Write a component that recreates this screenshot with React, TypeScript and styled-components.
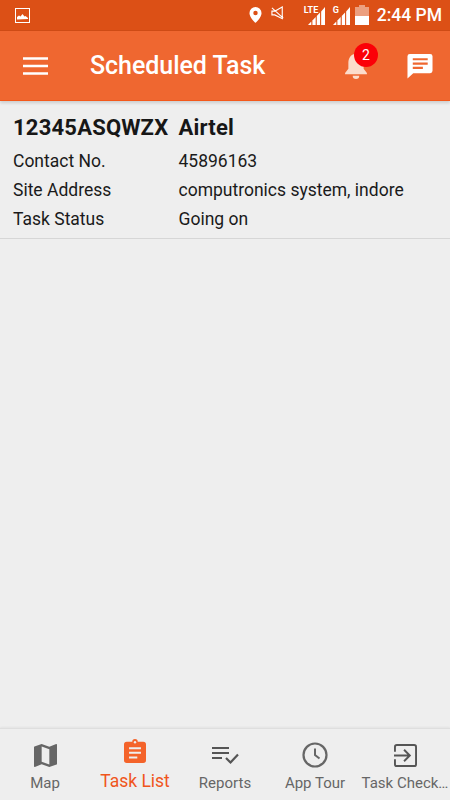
import React from "react";
import styled, { createGlobalStyle } from "styled-components";

const Global = createGlobalStyle`
  html, body { margin: 0; padding: 0; background: #eeeeee; }
  body { font-family: Roboto, "Liberation Sans", sans-serif; }
  * { box-sizing: border-box; }
`;

const Page = styled.div`
  width: 450px;
  height: 800px;
  display: flex;
  flex-direction: column;
  background: #eeeeee;
  overflow: hidden;
`;

const StatusBar = styled.div`
  height: 31px;
  flex: none;
  background: #dc5016;
  border-bottom: 1px solid #cf4c16;
  display: flex;
  align-items: center;
  padding: 0 8px 0 15px;
  color: #fff;
`;

const StatusRight = styled.div`
  margin-left: auto;
  display: flex;
  align-items: center;
`;

const Clock = styled.span`
  font-size: 17.5px;
  font-weight: 500;
  margin-left: 8px;
`;

const AppBar = styled.header`
  height: 70px;
  flex: none;
  background: #ef6730;
  border-bottom: 1px solid #f4581a;
  box-shadow: 0 2px 3px rgba(0, 0, 0, 0.14);
  display: flex;
  align-items: center;
  padding: 0 17px 0 23px;
  position: relative;
`;

const Title = styled.h1`
  margin: 0 0 0 42px;
  font-size: 25px;
  font-weight: 500;
  letter-spacing: -0.05px;
  color: #fff;
  line-height: 30px;
`;

const Actions = styled.div`
  margin-left: auto;
  display: flex;
  align-items: center;
  gap: 39px;
`;

const BellWrap = styled.div`
  position: relative;
  width: 24px;
  height: 30px;
  display: flex;
  align-items: center;
`;

const Badge = styled.span`
  position: absolute;
  top: -8px;
  left: 10px;
  width: 24px;
  height: 24px;
  border-radius: 50%;
  background: #fb0007;
  color: #fff;
  font-size: 14px;
  display: flex;
  align-items: center;
  justify-content: center;
`;

const Card = styled.section`
  border-bottom: 1px solid #d6d6d6;
  padding: 13px 0 4px 13px;
  display: grid;
  grid-template-columns: 165.5px 1fr;
  color: #1a1a1a;
`;

const Heading = styled.div`
  font-size: 22px;
  font-weight: 700;
  line-height: 28px;
  letter-spacing: 0.22px;
  margin-bottom: 5px;
  color: #171717;
`;

const Cell = styled.div`
  font-size: 17.5px;
  line-height: 29px;
  height: 29px;
`;

const Spacer = styled.main`
  flex: 1;
`;

const TabBar = styled.nav`
  height: 72px;
  flex: none;
  border-top: 1px solid #dedede;
  box-shadow: 0 -1px 2px rgba(0, 0, 0, 0.05);
  display: grid;
  grid-template-columns: repeat(5, 90px);
`;

const Tab = styled.div<{ $active?: boolean }>`
  display: flex;
  flex-direction: column;
  align-items: center;
  padding-top: ${(p) => (p.$active ? "8px" : "13px")};
  color: ${(p) => (p.$active ? "#f0551c" : "#666666")};
`;

const TabIcon = styled.div<{ $active?: boolean }>`
  height: ${(p) => (p.$active ? "28px" : "26px")};
  display: flex;
  align-items: center;
  justify-content: center;
`;

const TabLabel = styled.span<{ $active?: boolean }>`
  font-size: ${(p) => (p.$active ? "17.5px" : "15px")};
  line-height: 20px;
  margin-top: ${(p) => (p.$active ? "6px" : "5px")};
  white-space: nowrap;
`;

const MuteIcon = styled.svg`
  margin: 0 0 4px 9px;
`;

const Battery = styled.svg`
  margin-left: 5px;
`;

const Signal = () => (
  <svg width="17" height="18" viewBox="0 2 15.500 18" preserveAspectRatio="none">
    <path d="M0 20h3v-3.5L0 20z" fill="#fff" />
    <path d="M4 20h3v-8l-3 3.500z" fill="#fff" />
    <path d="M8 20h3V7.500L8 11z" fill="#fff" />
    <path d="M12 20h3.500V2L12 6.500z" fill="#fff" />
  </svg>
);

const SmallTag = styled.span<{ $left: number }>`
  position: absolute;
  top: -1px;
  left: ${(p) => p.$left}px;
  font-size: 9px;
  font-weight: 700;
  color: #fff;
  line-height: 9px;
`;

const SignalWrap = styled.div<{ $gap: number }>`
  position: relative;
  margin-left: ${(p) => p.$gap}px;
  height: 18px;
  margin-top: 2px;
  display: flex;
`;

export default function App() {
  return (
    <Page>
      <Global />
      <StatusBar>
        <svg width="15" height="15" viewBox="0 0 15 15">
          <rect x="0.500" y="0.500" width="14" height="14" fill="none" stroke="#fff" />
          <path d="M2 11.500V9l2-1.500 1.500 1 2-2.500 2 2.500 1-.5 2.500 2v1z" fill="#fff" />
        </svg>
        <StatusRight>
          <svg width="13" height="18" viewBox="0 0 14 18">
            <path d="M7 0.500A6.500 6.500 0 0 0 .5 7C.5 11.500 7 17.500 7 17.500S13.500 11.500 13.500 7A6.500 6.500 0 0 0 7 .5zm0 8.700A2.400 2.400 0 1 1 7 4.400a2.400 2.400 0 0 1 0 4.800z" fill="#fff" />
          </svg>
          <MuteIcon width="15" height="15" viewBox="0 0 16 16">
            <path d="M1 5.500h3L12 1v12.500L4 9.500H1zM1 2l12 11" fill="none" stroke="#fff" strokeWidth="1.200" />
          </MuteIcon>
          <SignalWrap $gap={22}>
            <SmallTag $left={-4}>LTE</SmallTag>
            <Signal />
          </SignalWrap>
          <SignalWrap $gap={8}>
            <SmallTag $left={0}>G</SmallTag>
            <Signal />
          </SignalWrap>
          <Battery width="14" height="20" viewBox="0 0 14 20">
            <path d="M4 0h6v2h4v18H0V2h4z" fill="#fff" opacity="0.45" />
            <rect x="0" y="11" width="14" height="9" fill="#fff" />
          </Battery>
          <Clock>2:44 PM</Clock>
        </StatusRight>
      </StatusBar>
      <AppBar>
        <svg width="25" height="18" viewBox="0 0 25 18">
          <path d="M0 1.500h25M0 9h25M0 16.500h25" stroke="#fff" strokeWidth="2.400" fill="none" />
        </svg>
        <Title>Scheduled Task</Title>
        <Actions>
          <BellWrap>
            <svg width="24" height="28" viewBox="1 3 22 25">
              <path d="M12 3c-1 0-1.500.8-1.500 1.500C6.500 5.500 5 9 5 13v5l-3 4v1h20v-1l-3-4v-5c0-4-1.500-7.500-5.500-8.500C13.500 3.800 13 3 12 3z" fill="#fcdccb" />
              <path d="M9 24.500h6a3 3 0 0 1-6 0z" fill="#fcdccb" />
            </svg>
            <Badge>2</Badge>
          </BellWrap>
          <svg width="26" height="26" viewBox="0 0 27 27">
            <path d="M3 1h21a2.500 2.500 0 0 1 2.500 2.500v15A2.500 2.500 0 0 1 24 21H6.500L.5 26.500v-23A2.500 2.500 0 0 1 3 1z" fill="#fff" />
            <path d="M6 6.500h15.500M6 11h15.500M6 15.500h10.500" stroke="#ef6730" strokeWidth="2.200" fill="none" />
          </svg>
        </Actions>
      </AppBar>
      <Card>
        <Heading>12345ASQWZX</Heading>
        <Heading>Airtel</Heading>
        <Cell>Contact No.</Cell>
        <Cell>45896163</Cell>
        <Cell>Site Address</Cell>
        <Cell>computronics system, indore</Cell>
        <Cell>Task Status</Cell>
        <Cell>Going on</Cell>
      </Card>
      <Spacer />
      <TabBar>
        <Tab>
          <TabIcon>
            <svg width="23" height="23" viewBox="3 3 18 18">
              <path d="M20.500 3l-.16.03L15 5.100 9 3 3.360 4.900c-.21.07-.36.25-.36.48V20.500c0 .28.22.5.5.5l.16-.03L9 18.900l6 2.100 5.640-1.900c.21-.07.36-.25.36-.48V3.500c0-.28-.22-.5-.5-.5zM15 19l-6-2.110V5l6 2.110V19z" fill="#666" />
            </svg>
          </TabIcon>
          <TabLabel>Map</TabLabel>
        </Tab>
        <Tab $active>
          <TabIcon $active>
            <svg width="22" height="24" viewBox="0 0 24 26">
              <path d="M3 3h6a3 3 0 0 1 6 0h6a3 3 0 0 1 3 3v17a3 3 0 0 1-3 3H3a3 3 0 0 1-3-3V6a3 3 0 0 1 3-3z" fill="#f4632a" />
              <circle cx="12" cy="3.500" r="1.300" fill="#eee" />
              <path d="M5.500 10h13M5.500 15h13M5.500 20h9" stroke="#eee" strokeWidth="2.200" fill="none" />
            </svg>
          </TabIcon>
          <TabLabel $active>Task List</TabLabel>
        </Tab>
        <Tab>
          <TabIcon>
            <svg width="28" height="24" viewBox="0 0 28 24">
              <path d="M1 5h17M1 10h17M1 15h10" stroke="#555" strokeWidth="2.200" fill="none" />
              <path d="M15 15l4.500 4.500L27 11.500" stroke="#555" strokeWidth="2.200" fill="none" />
            </svg>
          </TabIcon>
          <TabLabel>Reports</TabLabel>
        </Tab>
        <Tab>
          <TabIcon>
            <svg width="26" height="26" viewBox="0 0 26 26">
              <circle cx="13" cy="13" r="11.500" fill="none" stroke="#666" strokeWidth="2.200" />
              <path d="M13 6.500V13l4.500 3.500" fill="none" stroke="#666" strokeWidth="2" />
            </svg>
          </TabIcon>
          <TabLabel>App Tour</TabLabel>
        </Tab>
        <Tab>
          <TabIcon>
            <svg width="23" height="23" viewBox="0 0 24 24">
              <path d="M1 8V3a2 2 0 0 1 2-2h18a2 2 0 0 1 2 2v18a2 2 0 0 1-2 2H3a2 2 0 0 1-2-2v-5" fill="none" stroke="#555" strokeWidth="2" />
              <path d="M0 12h16M10.500 6l6 6-6 6" fill="none" stroke="#555" strokeWidth="2" />
            </svg>
          </TabIcon>
          <TabLabel>Task Check…</TabLabel>
        </Tab>
      </TabBar>
    </Page>
  );
}
